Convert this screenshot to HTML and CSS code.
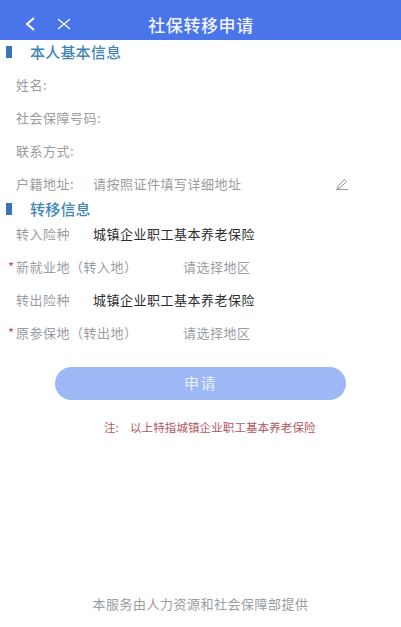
FILE: index.html
```html
<!DOCTYPE html>
<html lang="zh-CN">
<head>
    <meta charset="UTF-8">
    <meta name="viewport" content="width=device-width, initial-scale=1.0">
    <title>社保转移申请</title>
    <link rel="stylesheet" href="styles.css">
</head>
<body>
    <div class="page">
        <header class="topbar">
            <svg class="icon-back" width="12" height="16" viewBox="0 0 12 16">
                <path d="M10 2 L3 8 L10 14" fill="none" stroke="#fff" stroke-width="2"/>
            </svg>
            <svg class="icon-close" width="14" height="14" viewBox="0 0 14 14">
                <path d="M1 2 L13 12 M13 2 L1 12" fill="none" stroke="#fff" stroke-width="1.4"/>
            </svg>
            <h1 class="topbar-title">社保转移申请</h1>
        </header>

        <section class="group group-personal">
            <h2 class="group-title">本人基本信息</h2>
            <div class="row"><span class="label">姓名:</span></div>
            <div class="row"><span class="label">社会保障号码:</span></div>
            <div class="row"><span class="label">联系方式:</span></div>
            <div class="row">
                <span class="label label-short">户籍地址:</span>
                <span class="placeholder">请按照证件填写详细地址</span>
                <svg class="icon-edit" width="14" height="12" viewBox="0 0 14 12">
                    <path d="M3 8 L9.5 1.5 L11.5 3.5 L5 10 L2.5 10.5 Z M1 11.5 H13" fill="none" stroke="#8a8f96" stroke-width="0.9"/>
                </svg>
            </div>
        </section>

        <section class="group group-transfer">
            <h2 class="group-title">转移信息</h2>
            <div class="row">
                <span class="label label-short">转入险种</span>
                <span class="value">城镇企业职工基本养老保险</span>
            </div>
            <div class="row row-required">
                <span class="label label-long">新就业地（转入地）</span>
                <span class="placeholder">请选择地区</span>
            </div>
            <div class="row">
                <span class="label label-short">转出险种</span>
                <span class="value">城镇企业职工基本养老保险</span>
            </div>
            <div class="row row-required">
                <span class="label label-long">原参保地（转出地）</span>
                <span class="placeholder">请选择地区</span>
            </div>
        </section>

        <button class="btn-apply">申请</button>
        <p class="note"><span class="note-tag">注:</span>以上特指城镇企业职工基本养老保险</p>

        <footer class="footer">本服务由人力资源和社会保障部提供</footer>
    </div>
</body>
</html>
```

FILE: styles.css
```css
* {
    margin: 0;
    padding: 0;
    box-sizing: border-box;
    font-family: "Noto Sans CJK SC", "Noto Sans", sans-serif;
}

body {
    background-color: #fff;
    color: #999da1;
}

.page {
    display: flex;
    flex-direction: column;
    height: 627px;
    overflow: hidden;
}

.topbar {
    display: flex;
    align-items: center;
    flex-shrink: 0;
    height: 40px;
    padding-top: 8px;
    padding-left: 24px;
    background-color: #4a74e9;
}

.icon-close {
    margin-left: 21px;
}

.topbar-title {
    flex: 1;
    margin-right: 70px;
    text-align: center;
    font-size: 17px;
    font-weight: 500;
    letter-spacing: 0.6px;
    color: #f1f5fe;
}

.group-personal {
    padding-top: 4px;
}

.group-transfer {
    padding-top: 1px;
}

.group-title {
    position: relative;
    height: 16px;
    padding-left: 30px;
    font-size: 15px;
    font-weight: 500;
    line-height: 16px;
    letter-spacing: 0.2px;
    color: #3f86b8;
}

.group-title::before {
    content: "";
    position: absolute;
    left: 6px;
    top: 2px;
    width: 6px;
    height: 12px;
    background-color: #3a72bd;
}

.row {
    position: relative;
    display: flex;
    align-items: center;
    height: 33px;
    padding-left: 16px;
    font-size: 13px;
    letter-spacing: 0.5px;
}

.group-personal .group-title {
    margin-bottom: 8px;
}

.label-short {
    width: 77px;
}

.label-long {
    width: 167px;
}

.value {
    color: #2b2d30;
}

.placeholder {
    color: #999da1;
}

.icon-edit {
    position: absolute;
    right: 52px;
    top: 11px;
}

.row-required::before {
    content: "*";
    position: absolute;
    left: 8px;
    top: 7px;
    color: #b8555a;
}

.btn-apply {
    align-self: center;
    width: 291px;
    height: 33px;
    margin-top: 18px;
    padding-bottom: 3px;
    border: none;
    border-radius: 17px;
    background-color: #9db8f5;
    color: #e8effd;
    font-size: 15px;
    letter-spacing: 1.5px;
}

.note {
    margin-top: 19px;
    padding-left: 104px;
    font-size: 11.5px;
    letter-spacing: 0.1px;
    color: #b4565c;
}

.note-tag {
    display: inline-block;
    width: 26px;
}

.footer {
    margin-top: auto;
    padding-bottom: 14px;
    text-align: center;
    font-size: 13px;
    letter-spacing: 0.5px;
    color: #999da1;
}
```
